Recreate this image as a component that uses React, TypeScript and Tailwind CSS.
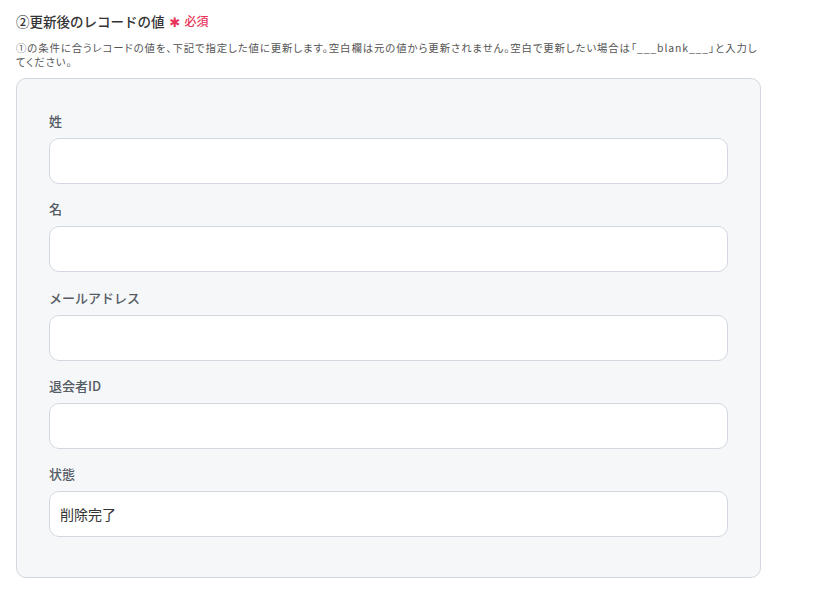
const fields = [
  { label: "姓", value: "" },
  { label: "名", value: "" },
  { label: "メールアドレス", value: "" },
  { label: "退会者ID", value: "" },
  { label: "状態", value: "削除完了" },
];

export default function App() {
  return (
    <div
      className="w-[833px] h-[606px] bg-white pl-4 pt-[11px]"
      style={{ fontFamily: '"Noto Sans CJK JP", "Noto Sans", sans-serif' }}
    >
      <div className="w-[745px]">
        {/* Section heading */}
        <div className="flex items-center h-5">
          <span className="text-[13.5px] font-medium text-[#333]">②更新後のレコードの値</span>
          <span className="ml-[5px] mt-[3px] text-[13px] font-bold text-[#e8335a] [font-family:'DejaVu_Sans']">✱</span>
          <span className="ml-[4px] text-[12px] font-medium text-[#e8335a]">必須</span>
        </div>
        <p className="mt-[10px] text-[10.4px] leading-[14px] tracking-[0.9px] text-[#555] [font-feature-settings:'palt']">
          ①の条件に合うレコードの値を、下記で指定した値に更新します。空白欄は元の値から更新されません。空白で更新したい場合は「___blank___」と入力してください。
        </p>

        {/* Field panel */}
        <div className="mt-[9px] h-[500px] rounded-[10px] border border-[#d3d8e0] bg-[#f6f7f9] px-8 pt-[33px]">
          {fields.map((f) => (
            <div key={f.label} className="mb-[16.25px]">
              <div className="h-[18px] text-[13px] font-medium leading-[18px] text-[#555b63]">{f.label}</div>
              <div className="mt-2 flex h-[46px] items-center rounded-[10px] border border-[#d3d8e0] bg-white px-[10px] text-[14px] text-[#333]">
                {f.value}
              </div>
            </div>
          ))}
        </div>
      </div>
    </div>
  );
}
